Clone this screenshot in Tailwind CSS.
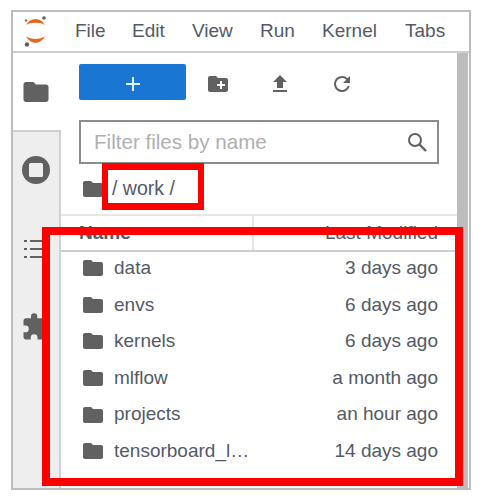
<!DOCTYPE html>
<html lang="en">
<head>
    <meta charset="UTF-8">
    <title>JupyterLab file browser</title>
    <script src="https://cdn.jsdelivr.net/npm/@tailwindcss/browser@4"></script>
</head>
<body class="bg-white">
    <div class="relative w-[480px] h-[501px] pt-[10px] pl-[11px] font-['Liberation_Sans',sans-serif] text-[#535a66] overflow-hidden">
        <!-- Window -->
        <div class="w-[460px] h-[480px] border-2 border-[#bdbdbd] flex flex-col bg-white">
            <!-- Menu bar -->
            <div class="h-[41px] shrink-0 border-b-2 border-[#cfcfcf] flex items-center text-[19px]">
                <svg class="ml-[10px] mr-[26px]" width="26" height="32" viewBox="0 0 26 32">
                    <path d="M3 9 C7 1 18 1 22 9 C18 6 7 6 3 9 Z" fill="#e8671c"/>
                    <path d="M3 20 C7 29 18 29 22 20 C18 24 7 24 3 20 Z" fill="#e8671c"/>
                    <circle cx="21" cy="2" r="1.800" fill="#616161"/>
                    <circle cx="3" cy="4.500" r="1.200" fill="#757575"/>
                    <circle cx="4" cy="28.500" r="2.200" fill="#616161"/>
                </svg>
                <span class="w-[57px]">File</span>
                <span class="w-[60px]">Edit</span>
                <span class="w-[68px]">View</span>
                <span class="w-[62px]">Run</span>
                <span class="w-[83px]">Kernel</span>
                <span>Tabs</span>
            </div>
            <div class="flex flex-1 min-h-0">
                <!-- Side tabs -->
                <div class="w-[48px] shrink-0 flex flex-col bg-[#eeeeee] border-r-2 border-[#d0d0d0]">
                    <div class="h-[79px] shrink-0 -mr-[2px] bg-white border-b-2 border-[#cfcfcf] flex items-center justify-center pr-[3px]">
                        <svg width="30" height="30" viewBox="0 0 24 24"><path fill="#616161" d="M10 4H4c-1.100 0-2 .9-2 2v12c0 1.100.9 2 2 2h16c1.100 0 2-.9 2-2V8c0-1.100-.9-2-2-2h-8l-2-2z"/></svg>
                    </div>
                    <div class="h-[75px] shrink-0 flex items-center justify-center">
                        <svg width="30" height="30" viewBox="0 0 30 30"><circle cx="15" cy="15" r="14" fill="#616161"/><rect x="8" y="8" width="14" height="14" rx="1.500" fill="#eeeeee"/></svg>
                    </div>
                    <div class="h-[84px] shrink-0 flex items-center justify-center">
                        <svg width="26" height="22" viewBox="0 0 26 22" fill="#616161"><rect x="1" y="2" width="3" height="2"/><rect x="7" y="2" width="18" height="2"/><rect x="1" y="10" width="3" height="2"/><rect x="7" y="10" width="18" height="2"/><rect x="1" y="18" width="3" height="2"/><rect x="7" y="18" width="18" height="2"/></svg>
                    </div>
                    <div class="h-[71px] shrink-0 flex items-center justify-center">
                        <svg width="30" height="30" viewBox="0 0 24 24"><path fill="#616161" d="M20.500 11H19V7c0-1.100-.9-2-2-2h-4V3.500a2.500 2.500 0 0 0-5 0V5H4c-1.100 0-2 .9-2 2v3.800h1.500a2.700 2.700 0 0 1 0 5.400H2V20c0 1.100.9 2 2 2h3.800v-1.500a2.700 2.700 0 0 1 5.400 0V22H17c1.100 0 2-.9 2-2v-4h1.500a2.500 2.500 0 0 0 0-5z"/></svg>
                    </div>
                </div>
                <!-- File browser -->
                <div class="flex-1 min-w-0 flex flex-col">
                    <!-- Toolbar -->
                    <div class="h-[67px] shrink-0 flex items-center pl-[18px] pb-[9px]">
                        <div class="w-[107px] h-[36px] bg-[#1976d2] rounded-[2px] flex items-center justify-center">
                            <svg class="mt-[3px]" width="14" height="14" viewBox="0 0 14 14"><path d="M6 0h2v6h6v2H8v6H6V8H0V6h6z" fill="#e3f0fb"/></svg>
                        </div>
                        <svg class="ml-[20px] mt-[3px]" width="24" height="24" viewBox="0 0 24 24"><path fill="#616161" d="M10 4H4c-1.100 0-2 .9-2 2v12c0 1.100.9 2 2 2h16c1.100 0 2-.9 2-2V8c0-1.100-.9-2-2-2h-8l-2-2zm9 10h-3v3h-2v-3h-3v-2h3V9h2v3h3v2z"/></svg>
                        <svg class="ml-[38px] mt-[3px]" width="24" height="24" viewBox="0 0 24 24"><path fill="#616161" d="M9 16h6v-6h4l-7-7-7 7h4zm-4 2h14v2H5z"/></svg>
                        <svg class="ml-[38px] mt-[3px]" width="24" height="24" viewBox="0 0 24 24"><path fill="#616161" d="M17.650 6.350A7.960 7.960 0 0 0 12 4a8 8 0 1 0 7.730 10h-2.080A6 6 0 1 1 12 6c1.660 0 3.140.69 4.220 1.780L13 11h7V4l-2.350 2.350z"/></svg>
                    </div>
                    <!-- Filter -->
                    <div class="ml-[18px] mr-[18px] h-[44px] shrink-0 border-2 border-[#8c8c8c] flex items-center pl-[13px] pr-[8px] justify-between">
                        <span class="text-[20.600px] text-[#b0b0b0]">Filter files by name</span>
                        <svg width="24" height="24" viewBox="0 0 24 24"><circle cx="10" cy="10" r="6" fill="none" stroke="#616161" stroke-width="2"/><path d="M14.500 14.500L21 21" stroke="#616161" stroke-width="2.400"/></svg>
                    </div>
                    <!-- Breadcrumbs -->
                    <div class="h-[50px] shrink-0 flex items-center pl-[20px] text-[19.500px]">
                        <svg width="24" height="24" viewBox="0 0 24 24" class="mr-[7px]"><path fill="#616161" d="M10 4H4c-1.100 0-2 .9-2 2v12c0 1.100.9 2 2 2h16c1.100 0 2-.9 2-2V8c0-1.100-.9-2-2-2h-8l-2-2z"/></svg>
                        <span>/ work /</span>
                    </div>
                    <!-- Column headers -->
                    <div class="h-[38px] shrink-0 border-t-2 border-b-2 border-t-[#e6e6e6] border-b-[#cfcfcf] flex items-center text-[19px]">
                        <div class="w-[193px] h-full flex items-center pl-[18px] border-r-2 border-[#e6e6e6] font-bold">Name</div>
                        <div class="flex-1 text-right pr-[19px]">Last Modified</div>
                    </div>
                    <!-- Rows -->
                    <ul class="flex-1 text-[19px]">
                        <li class="h-[36.600px] flex items-center pl-[20px] pr-[19px] pb-[4px]">
                            <svg width="24" height="24" viewBox="0 0 24 24"><path fill="#616161" d="M10 4H4c-1.100 0-2 .9-2 2v12c0 1.100.9 2 2 2h16c1.100 0 2-.9 2-2V8c0-1.100-.9-2-2-2h-8l-2-2z"/></svg>
                            <span class="ml-[9px] flex-1">data</span><span>3 days ago</span>
                        </li>
                        <li class="h-[36.600px] flex items-center pl-[20px] pr-[19px] pb-[4px]">
                            <svg width="24" height="24" viewBox="0 0 24 24"><path fill="#616161" d="M10 4H4c-1.100 0-2 .9-2 2v12c0 1.100.9 2 2 2h16c1.100 0 2-.9 2-2V8c0-1.100-.9-2-2-2h-8l-2-2z"/></svg>
                            <span class="ml-[9px] flex-1">envs</span><span>6 days ago</span>
                        </li>
                        <li class="h-[36.600px] flex items-center pl-[20px] pr-[19px] pb-[4px]">
                            <svg width="24" height="24" viewBox="0 0 24 24"><path fill="#616161" d="M10 4H4c-1.100 0-2 .9-2 2v12c0 1.100.9 2 2 2h16c1.100 0 2-.9 2-2V8c0-1.100-.9-2-2-2h-8l-2-2z"/></svg>
                            <span class="ml-[9px] flex-1">kernels</span><span>6 days ago</span>
                        </li>
                        <li class="h-[36.600px] flex items-center pl-[20px] pr-[19px] pb-[4px]">
                            <svg width="24" height="24" viewBox="0 0 24 24"><path fill="#616161" d="M10 4H4c-1.100 0-2 .9-2 2v12c0 1.100.9 2 2 2h16c1.100 0 2-.9 2-2V8c0-1.100-.9-2-2-2h-8l-2-2z"/></svg>
                            <span class="ml-[9px] flex-1">mlflow</span><span>a month ago</span>
                        </li>
                        <li class="h-[36.600px] flex items-center pl-[20px] pr-[19px] pb-[4px]">
                            <svg width="24" height="24" viewBox="0 0 24 24"><path fill="#616161" d="M10 4H4c-1.100 0-2 .9-2 2v12c0 1.100.9 2 2 2h16c1.100 0 2-.9 2-2V8c0-1.100-.9-2-2-2h-8l-2-2z"/></svg>
                            <span class="ml-[9px] flex-1">projects</span><span>an hour ago</span>
                        </li>
                        <li class="h-[36.600px] flex items-center pl-[20px] pr-[19px] pb-[4px]">
                            <svg width="24" height="24" viewBox="0 0 24 24"><path fill="#616161" d="M10 4H4c-1.100 0-2 .9-2 2v12c0 1.100.9 2 2 2h16c1.100 0 2-.9 2-2V8c0-1.100-.9-2-2-2h-8l-2-2z"/></svg>
                            <span class="ml-[9px] flex-1">tensorboard_l…</span><span>14 days ago</span>
                        </li>
                    </ul>
                </div>
                <!-- Scrollbar -->
                <div class="w-[12px] shrink-0 pr-[1px]"><div class="h-full bg-[#bdbdbd]"></div></div>
            </div>
        </div>
        <!-- Annotation boxes drawn over the screenshot -->
        <div class="absolute left-[102px] top-[163px] w-[102px] h-[47px] border-x-[6px] border-y-[7px] border-[#ff0000]"></div>
        <div class="absolute left-[42px] top-[227px] w-[421px] h-[259px] border-[8px] border-[#ff0000]"></div>
    </div>
</body>
</html>
